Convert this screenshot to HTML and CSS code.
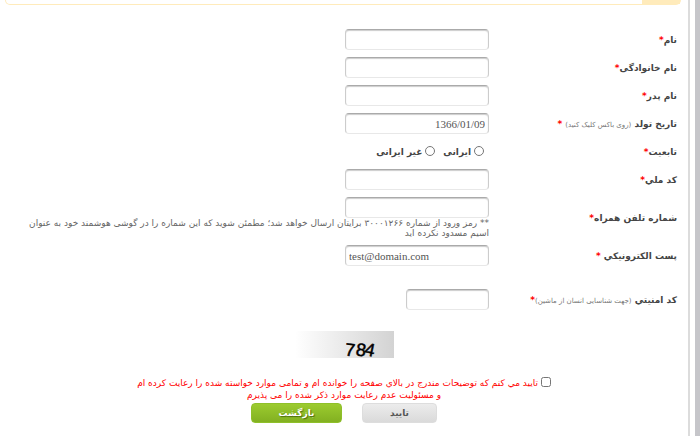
FILE: index.html
```html
<!DOCTYPE html>
<html lang="fa" dir="rtl">
<head>
  <meta charset="UTF-8" />
  <title>ثبت نام</title>
  <link rel="stylesheet" href="styles.css">
</head>
<body>
  <div class="page">
    <div class="notice"><div class="notice-tab"></div></div>

    <form class="register">
      <div class="row">
        <label for="name">نام<span class="req">*</span></label>
        <div class="field"><input type="text" id="name" /></div>
      </div>
      <div class="row">
        <label for="family">نام خانوادگی<span class="req">*</span></label>
        <div class="field"><input type="text" id="family" /></div>
      </div>
      <div class="row">
        <label for="father">نام پدر<span class="req">*</span></label>
        <div class="field"><input type="text" id="father" /></div>
      </div>
      <div class="row">
        <label for="birth">تاریخ تولد <small>(روی باکس کلیک کنید)</small> <span class="req">*</span></label>
        <div class="field"><input type="text" id="birth" value="1366/01/09" /></div>
      </div>
      <div class="row" role="radiogroup" aria-labelledby="nation">
        <span class="label" id="nation">تابعیت<span class="req">*</span></span>
        <div class="field radios">
          <input type="radio" name="nation" id="iranian" /><label for="iranian">ایرانی</label>
          <input type="radio" name="nation" id="foreign" /><label for="foreign">غیر ایرانی</label>
        </div>
      </div>
      <div class="row">
        <label for="code">کد ملي<span class="req">*</span></label>
        <div class="field"><input type="text" id="code" /></div>
      </div>
      <div class="row">
        <label for="mobile">شماره تلفن همراه<span class="req">*</span></label>
        <div class="field">
          <input type="text" id="mobile" />
          <p class="hint">** رمز ورود از شماره ۳۰۰۰۱۲۶۶ برایتان ارسال خواهد شد؛ مطمئن شوید که این شماره را در گوشی هوشمند خود به عنوان اسیم مسدود نکرده اید</p>
        </div>
      </div>
      <div class="row">
        <label for="email">پست الکترونیکي <span class="req">*</span></label>
        <div class="field"><input type="text" id="email" dir="ltr" value="test@domain.com" /></div>
      </div>
      <div class="row security">
        <label for="captcha">کد امنیتي <small>(جهت شناسایی انسان از ماشین)</small><span class="req">*</span></label>
        <div class="field"><input type="text" id="captcha" class="short" /></div>
      </div>

      <div class="footer">
        <svg class="captcha" width="99" height="27" viewBox="0 0 99 27" direction="ltr">
          <defs>
            <linearGradient id="fade">
              <stop offset="0" stop-color="#fff" />
              <stop offset="1" stop-color="#d3d3d3" />
            </linearGradient>
          </defs>
          <rect width="99" height="27" fill="url(#fade)" />
          <text x="50" y="25" transform="rotate(6 55 19)">7</text>
          <text x="61" y="25" transform="rotate(8 66 19)">8</text>
          <text x="70" y="25" transform="rotate(12 75 19)">4</text>
        </svg>

        <div class="agree">
          <input type="checkbox" id="agree" />
          <label for="agree">تایید مي کنم که توضیحات مندرج در بالاي صفحه را خوانده ام و تمامی موارد خواسته شده را رعایت کرده ام<br>و مسئولیت عدم رعایت موارد ذکر شده را می پذیرم</label>
        </div>

        <div class="buttons">
          <button type="submit" class="btn">تایید</button>
          <button type="button" class="btn green">بازگشت</button>
        </div>
      </div>
    </form>
  </div>
</body>
</html>
```
FILE: styles.css
```css
* {
  box-sizing: border-box;
}

body {
  margin: 0;
  padding-right: 10px;
  background: linear-gradient(to left, #c6c6ca 5px, #fff 5px);
  font-family: "DejaVu Sans", sans-serif;
  font-size: 9px;
  color: #444;
}

.page {
  min-height: 100vh;
  border-right: 2px solid #dcdcdc;
}

.notice {
  display: flex;
  height: 5px;
  margin: 0 7px 0 5px;
  border: 1px solid #ffebbb;
  border-top: 0;
  border-radius: 0 0 5px 5px;
}

.notice-tab {
  width: 38px;
  background: #ffebbb;
}

.register {
  padding: 24px 0 0;
}

.row {
  display: grid;
  grid-template-columns: 188px 1fr;
  align-items: center;
  min-height: 21px;
  margin: 0 11px 7px 28px;
}

.row > label,
.row > .label,
.radios label {
  font-weight: bold;
  white-space: nowrap;
}

.row small {
  font-size: 7px;
  font-weight: normal;
  color: #777;
}

.req {
  color: #f00;
}

.field input[type="text"] {
  display: block;
  width: 144px;
  height: 21px;
  padding: 0 3px;
  border: 1px solid #ccc;
  border-top-color: #aaa;
  border-bottom-color: #e8e8e8;
  border-radius: 4px;
  background: #fff;
  box-shadow: inset 0 1px 1px #ccc;
  font-family: "Liberation Serif", serif;
  font-size: 11px;
  color: #555;
}

.field input.short {
  width: 83px;
}

.radios {
  display: flex;
  align-items: center;
  padding-right: 5px;
}

.radios input {
  width: 10px;
  height: 10px;
  margin: 0 0 2px 3px;
}

.radios label {
  margin-left: 8px;
}

.hint {
  margin: 0;
  line-height: 10px;
  color: #666;
}

.security {
  margin-top: 23px;
}

.footer {
  display: flex;
  flex-direction: column;
  align-items: center;
}

.captcha {
  margin-top: 14px;
  overflow: visible;
}

.captcha text {
  font-family: "Liberation Sans", sans-serif;
  font-size: 18px;
  fill: #000;
  stroke: #000;
  stroke-width: 0.5;
}

.agree {
  margin-top: 19px;
  line-height: 12px;
  text-align: center;
  color: #f00;
}

.agree input {
  width: 10px;
  height: 10px;
  margin: 0;
  vertical-align: -1px;
}

.buttons {
  display: flex;
  gap: 20px;
  margin-top: 2px;
}

.btn {
  width: 75px;
  height: 20px;
  padding: 0;
  border: 1px solid #ddd;
  border-radius: 4px;
  background: linear-gradient(#ececec, #dadada);
  font-family: inherit;
  font-size: 9px;
  font-weight: bold;
  color: #555;
  cursor: pointer;
}

.btn.green {
  width: 91px;
  border-color: #8fc02a;
  background: linear-gradient(#9ccb2f, #82b021);
  color: #fff;
  text-shadow: 1px 1px 1px #4d6b10;
}
```
